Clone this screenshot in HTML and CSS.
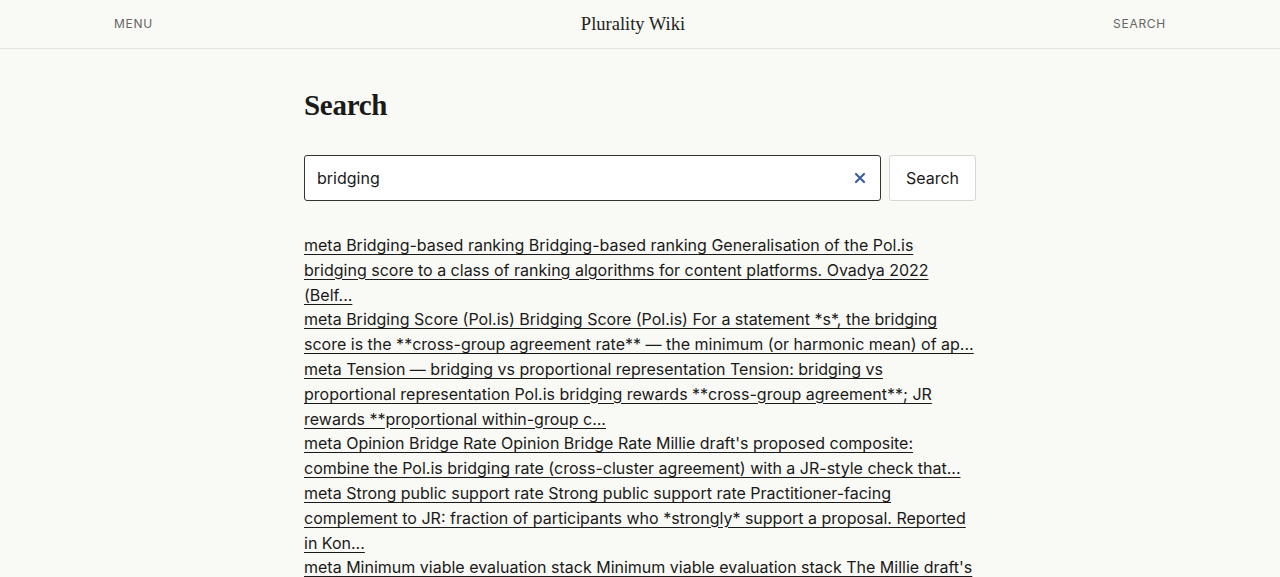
FILE: index.html
```html
<!DOCTYPE html>
<html lang="en">
<head>
  <meta charset="UTF-8" />
  <meta name="viewport" content="width=device-width, initial-scale=1.0"/>
  <title>Search - Plurality Wiki</title>
  <link rel="stylesheet" href="styles.css">
</head>
<body>

  <!-- Top bar -->
  <header class="topbar">
    <div class="topbar-inner">
      <a href="#" class="nav-link">Menu</a>
      <a href="#" class="brand">Plurality Wiki</a>
      <a href="#" class="nav-link">Search</a>
    </div>
  </header>

  <main class="page">
    <h1>Search</h1>

    <form class="search-form">
      <div class="search-box">
        <input type="text" id="q" value="bridging" autofocus />
        <button type="button" class="clear-btn" aria-label="Clear">
          <svg width="12" height="12" viewBox="0 0 12 12">
            <path d="M2 2 L10 10 M10 2 L2 10" stroke="#3d5f9e" stroke-width="2.2" stroke-linecap="round"/>
          </svg>
        </button>
      </div>
      <button type="submit" class="search-btn">Search</button>
    </form>

    <div class="results">
      <a href="#" class="result">meta Bridging-based ranking Bridging-based ranking Generalisation of the Pol.is bridging score to a class of ranking algorithms for content platforms. Ovadya 2022 (Belf...</a>
      <a href="#" class="result">meta Bridging Score (Pol.is) Bridging Score (Pol.is) For a statement *s*, the bridging score is the **cross-group agreement rate** — the minimum (or harmonic mean) of ap...</a>
      <a href="#" class="result">meta Tension — bridging vs proportional representation Tension: bridging vs proportional representation Pol.is bridging rewards **cross-group agreement**; JR rewards **proportional within-group c...</a>
      <a href="#" class="result">meta Opinion Bridge Rate Opinion Bridge Rate Millie draft's proposed composite: combine the Pol.is bridging rate (cross-cluster agreement) with a JR-style check that...</a>
      <a href="#" class="result">meta Strong public support rate Strong public support rate Practitioner-facing complement to JR: fraction of participants who *strongly* support a proposal. Reported in Kon...</a>
      <a href="#" class="result">meta Minimum viable evaluation stack Minimum viable evaluation stack The Millie draft's recommended combination of metrics: JR for proportionality, bridging rate for consensus...</a>
    </div>
  </main>

  <script>
    const q = document.getElementById('q');
    q.focus();
    q.setSelectionRange(q.value.length, q.value.length);
  </script>

</body>
</html>
```

FILE: styles.css
```css
body {
  margin: 0;
  background: #f9f9f5;
  color: #1a1a1a;
  font-family: Inter, "Noto Sans", sans-serif;
}
a {
  color: inherit;
}
.topbar {
  height: 48px;
  border-bottom: 1px solid #e4e4e0;
}
.topbar-inner {
  max-width: 1052px;
  height: 100%;
  margin: 0 auto;
  display: flex;
  justify-content: space-between;
  align-items: center;
}
.nav-link {
  font-size: 12px;
  letter-spacing: 0.06em;
  text-transform: uppercase;
  color: #666;
  text-decoration: none;
  margin-top: -2px;
}
.brand {
  font-family: "Liberation Serif", serif;
  font-size: 18.5px;
  color: #222;
  text-decoration: none;
}
.page {
  width: 672px;
  margin: 0 auto;
  padding-top: 40px;
}
h1 {
  font-family: "Liberation Serif", serif;
  font-size: 29px;
  font-weight: 700;
  margin: 0 0 33px;
  letter-spacing: -0.01em;
}
.search-form {
  display: flex;
  gap: 8px;
  margin-bottom: 32px;
}
.search-box {
  position: relative;
  flex: 1;
}
.search-box input {
  box-sizing: border-box;
  width: 100%;
  height: 46px;
  padding: 0 40px 0 12px;
  border: 1px solid #333;
  border-radius: 3px;
  background: #fff;
  font-family: inherit;
  font-size: 16px;
  color: #1a1a1a;
  caret-color: #1a1a1a;
  outline: none;
}
.clear-btn {
  position: absolute;
  right: 15px;
  top: 17px;
  padding: 0;
  border: none;
  background: none;
  line-height: 0;
  cursor: pointer;
}
.search-btn {
  height: 46px;
  padding: 0 16px;
  border: 1px solid #d6d6d2;
  border-radius: 3px;
  background: #fff;
  font-family: inherit;
  font-size: 16px;
  color: #1a1a1a;
  cursor: pointer;
}
.results {
  display: flex;
  flex-direction: column;
}
.result {
  font-size: 16px;
  line-height: 24.8px;
  text-decoration: underline;
  text-underline-offset: 3px;
}
```
